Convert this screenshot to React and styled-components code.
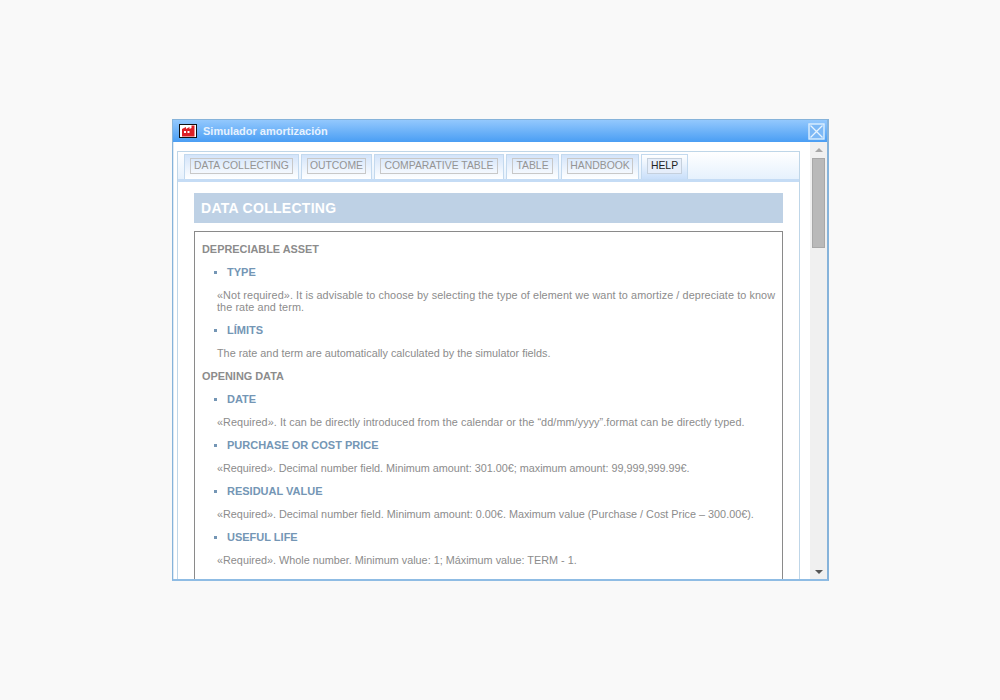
import React from 'react'
import styled, { createGlobalStyle } from 'styled-components'

const GlobalStyle = createGlobalStyle`
  html, body { margin: 0; padding: 0; background: #f9f9f9; }
  body { font-family: "Liberation Sans", Arial, sans-serif; }
`

const Page = styled.div`
  width: 1000px;
  height: 700px;
  padding: 119px 0 0 172px;
  box-sizing: border-box;
`

const Win = styled.div`
  width: 657px;
  height: 462px;
  box-sizing: border-box;
  border: 1px solid #86b3da;
  border-right-width: 2px;
  border-bottom: 2px solid #8fbce4;
  background: #fff;
  display: flex;
  flex-direction: column;
`

const TitleBar = styled.div`
  height: 22px;
  flex: none;
  display: flex;
  align-items: center;
  padding: 0 2px 0 6px;
  background: linear-gradient(#93c8fd, #4a9ef4);
`

const Logo = styled.svg`
  width: 18px;
  height: 14px;
  margin-right: 6px;
  flex: none;
`

const Title = styled.span`
  color: #e6f2ff;
  font-size: 11px;
  font-weight: bold;
  flex: 1;
`

const Close = styled.svg`
  width: 17px;
  height: 17px;
  flex: none;
`

const Body = styled.div`
  flex: 1;
  min-height: 0;
  display: flex;
  border-left: 1px solid #dbe9f5;
`

const Main = styled.div`
  flex: 1;
  min-width: 0;
  overflow: hidden;
  padding: 9px 10px 0 3px;
`

const Panel = styled.div`
  border: 1px solid #bfd6e8;
  border-bottom: none;
  height: 100%;
  box-sizing: border-box;
`

const TabStrip = styled.div`
  display: flex;
  gap: 2px;
  height: 30px;
  padding: 2px 0 0 6px;
  box-sizing: border-box;
  background: linear-gradient(#fff, #e6f1fd);
  border-bottom: 3px solid #c5dcf5;
`

const Tab = styled.div`
  width: ${p => p.$width}px;
  height: 25px;
  display: flex;
  padding: 3px 5px 0;
  box-sizing: border-box;
  border: 1px solid #c3d9ee;
  border-bottom: none;
  background: ${p => p.$active
    ? 'linear-gradient(#fff, #c9dffa)'
    : 'linear-gradient(#d3e4fa, #fff)'};
`

const TabLabel = styled.span`
  flex: 1;
  height: 16px;
  line-height: 14px;
  box-sizing: border-box;
  text-align: center;
  white-space: nowrap;
  font-size: 10.4px;
  border: 1px solid ${p => (p.$active ? '#c5d0dd' : '#c8c8c8')};
  color: ${p => (p.$active ? '#222' : '#949494')};
  background: ${p => (p.$active ? '#e6eefa' : 'transparent')};
`

const Content = styled.div`
  padding: 11px 16px 0;
`

const Banner = styled.h1`
  margin: 0 0 8px;
  height: 30px;
  line-height: 30px;
  padding-left: 7px;
  font-size: 14px;
  letter-spacing: 0.28px;
  font-weight: bold;
  color: #fff;
  background: #bed1e5;
`

const Box = styled.div`
  border: 1px solid #8a8a8a;
  padding: 11px 4px 40px 7px;
`

const Section = styled.h2`
  margin: 0 0 11px;
  font-size: 10.9px;
  line-height: 12px;
  font-weight: bold;
  color: #8c8c8c;
`

const Item = styled.h3`
  margin: 0 0 11px;
  padding-left: 25px;
  position: relative;
  font-size: 11px;
  line-height: 12px;
  font-weight: bold;
  color: #7496b5;
  &::before {
    content: '';
    position: absolute;
    left: 12px;
    top: 5px;
    width: 3px;
    height: 3px;
    background: #7496b5;
  }
`

const Para = styled.p`
  margin: 0 0 11px;
  padding-left: 15px;
  font-size: 10.83px;
  line-height: 12px;
  letter-spacing: ${p => p.$spacing || 0}px;
  color: #8c8c8c;
`

const Track = styled.div`
  width: 17px;
  flex: none;
  background: #f0f0f0;
  display: flex;
  flex-direction: column;
  align-items: center;
  padding: 6px 0 5px;
  box-sizing: border-box;
`

const Thumb = styled.div`
  width: 13px;
  height: 90px;
  margin-top: 6px;
  background: #b9b9b9;
  border: 1px solid #a8a8a8;
  box-sizing: border-box;
`

const Arrow = styled.div`
  width: 0;
  height: 0;
  border-left: 4px solid transparent;
  border-right: 4px solid transparent;
  ${p => (p.$down ? 'border-top: 4px solid #555; margin-top: auto;' : 'border-bottom: 4px solid #a8a8a8;')}
`

const tabs = [
  { label: 'DATA COLLECTING', width: 115 },
  { label: 'OUTCOME', width: 71 },
  { label: 'COMPARATIVE TABLE', width: 130 },
  { label: 'TABLE', width: 53 },
  { label: 'HANDBOOK', width: 78 },
  { label: 'HELP', width: 47 },
]

export default function App() {
  return (
    <Page>
      <GlobalStyle />
      <Win>
        <TitleBar>
          <Logo viewBox="0 0 18 14">
            <rect x="0.5" y="0.5" width="17" height="13" fill="#fff" stroke="#111" />
            <path d="M3 12.5V5L7 3V5L10.5 3V5L12.5 4V1.5H15.5V12.5Z" fill="#dc1f26" />
            <path d="M5 7h2v2H5zM8.5 7h2v2h-2z" fill="#fff" />
          </Logo>
          <Title>Simulador amortización</Title>
          <Close viewBox="0 0 17 17">
            <rect x="1" y="1" width="15" height="15" fill="#7db9f6" stroke="#dcefff" strokeWidth="1.4" />
            <path d="M2.5 2.5L14.5 14.5M14.5 2.5L2.5 14.5" stroke="#e6f4ff" strokeWidth="1.3" />
          </Close>
        </TitleBar>
        <Body>
          <Main>
            <Panel>
              <TabStrip>
                {tabs.map(t => (
                  <Tab key={t.label} $width={t.width} $active={t.label === 'HELP'}>
                    <TabLabel $active={t.label === 'HELP'}>{t.label}</TabLabel>
                  </Tab>
                ))}
              </TabStrip>
              <Content>
                <Banner>DATA COLLECTING</Banner>
                <Box>
                  <Section>DEPRECIABLE ASSET</Section>
                  <Item>TYPE</Item>
                  <Para $spacing={0.09}>«Not required». It is advisable to choose by selecting the type of element we want to amortize / depreciate to know the rate and term.</Para>
                  <Item>LÍMITS</Item>
                  <Para>The rate and term are automatically calculated by the simulator fields.</Para>
                  <Section>OPENING DATA</Section>
                  <Item>DATE</Item>
                  <Para $spacing={0.075}>«Required». It can be directly introduced from the calendar or the “dd/mm/yyyy”.format can be directly typed.</Para>
                  <Item>PURCHASE OR COST PRICE</Item>
                  <Para $spacing={-0.02}>«Required». Decimal number field. Minimum amount: 301.00€; maximum amount: 99,999,999.99€.</Para>
                  <Item>RESIDUAL VALUE</Item>
                  <Para>«Required». Decimal number field. Minimum amount: 0.00€. Maximum value (Purchase / Cost Price – 300.00€).</Para>
                  <Item>USEFUL LIFE</Item>
                  <Para>«Required». Whole number. Minimum value: 1; Máximum value: TERM - 1.</Para>
                </Box>
              </Content>
            </Panel>
          </Main>
          <Track>
            <Arrow />
            <Thumb />
            <Arrow $down />
          </Track>
        </Body>
      </Win>
    </Page>
  )
}
